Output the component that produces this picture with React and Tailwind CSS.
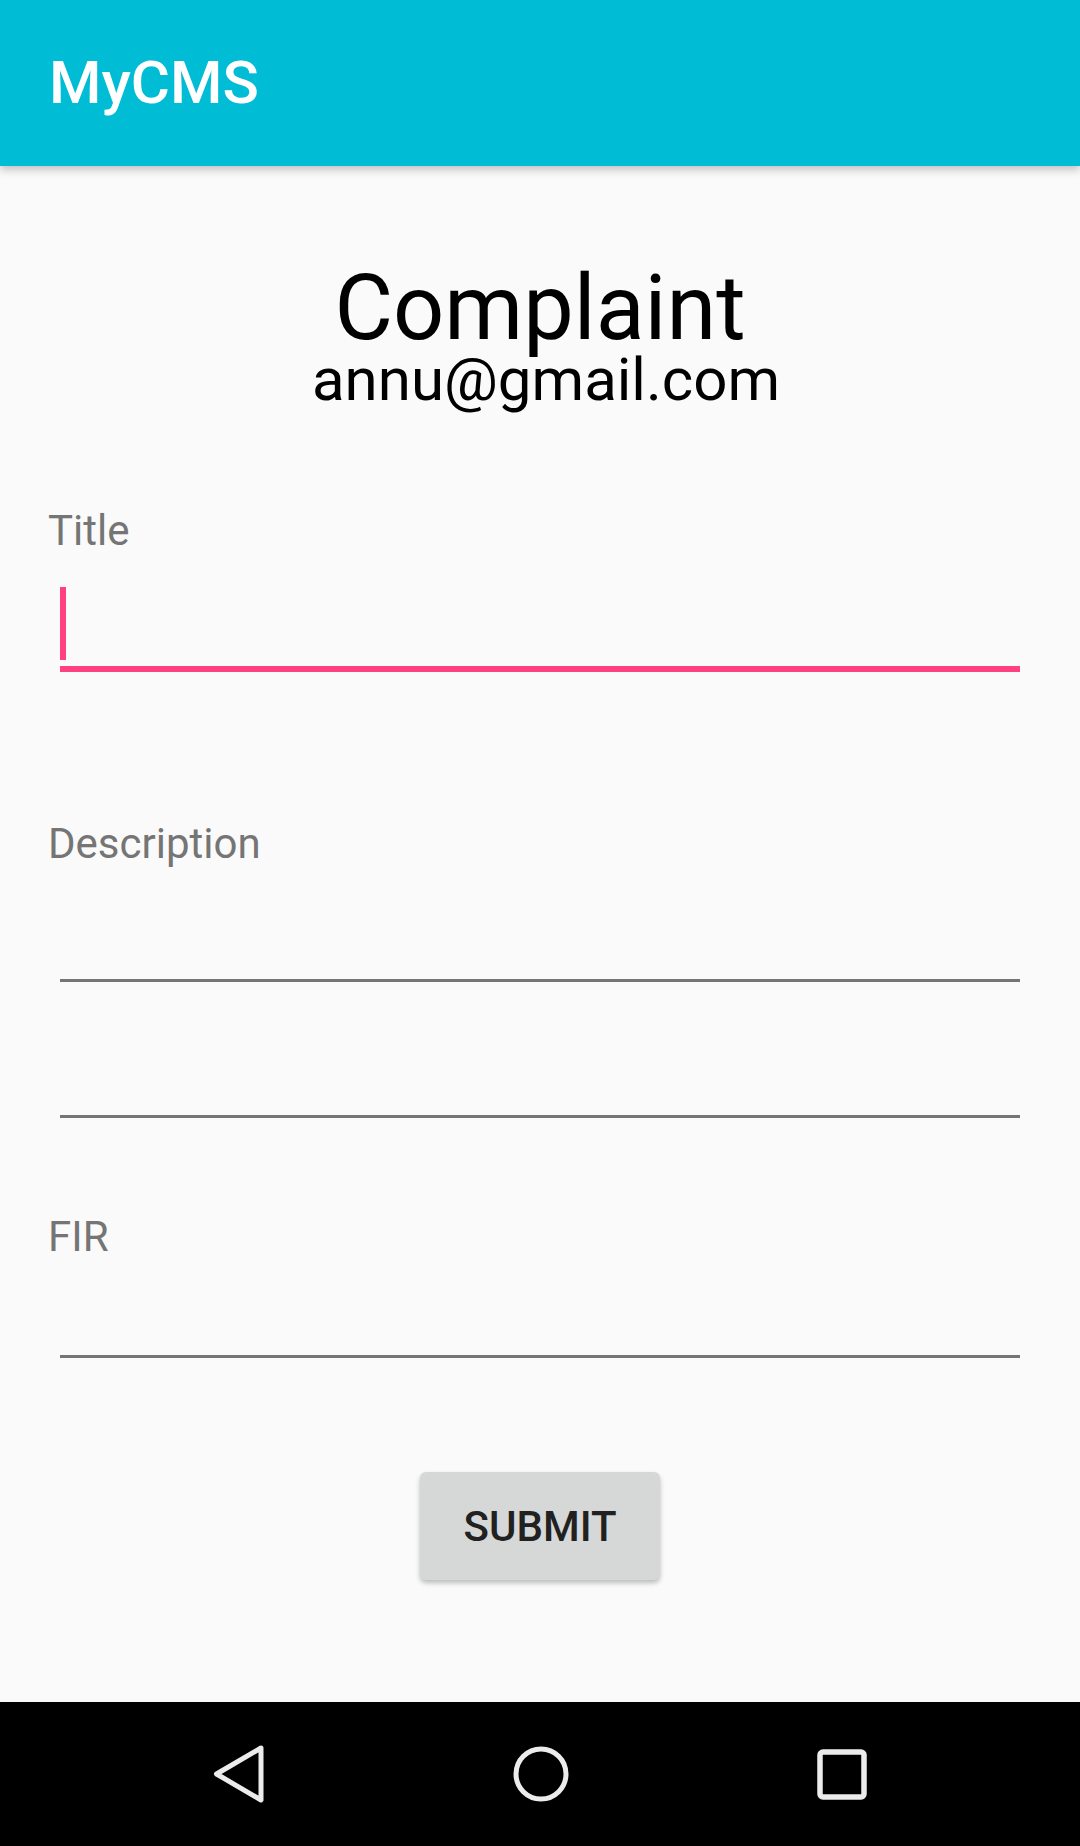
import React from 'react';

const Label = ({ children, className = '' }) => (
  <p className={`ml-[48px] text-[42px] leading-[42px] text-[#757575] ${className}`}>{children}</p>
);

const NavBar = () => (
  <nav className="h-[144px] bg-black flex items-center pl-[213px] gap-[248px]">
    {/* back */}
    <svg width="52" height="58" viewBox="0 0 52 58" className="shrink-0">
      <polygon
        points="48,3 3.5,29 48,55"
        fill="none"
        stroke="#ececec"
        strokeWidth="5"
        strokeLinejoin="round"
      />
    </svg>
    {/* home */}
    <svg width="56" height="56" viewBox="0 0 56 56" className="shrink-0">
      <circle cx="28" cy="28" r="25" fill="none" stroke="#ececec" strokeWidth="5" />
    </svg>
    {/* recents */}
    <svg width="50" height="51" viewBox="0 0 50 51" className="shrink-0">
      <rect x="3" y="3" width="44" height="45" rx="3" fill="none" stroke="#ececec" strokeWidth="5.5" />
    </svg>
  </nav>
);

export default function App() {
  return (
    <div className="min-h-screen h-[1846px] flex flex-col bg-[#fafafa] font-['Roboto','Liberation_Sans',sans-serif]">
      <header className="relative z-10 h-[166px] shrink-0 bg-[#00bcd4] flex items-center pl-[49px] shadow-[0_4px_8px_rgba(0,0,0,0.22)]">
        <h1 className="text-[60px] leading-none font-medium text-white">MyCMS</h1>
      </header>

      <main className="flex-1 flex flex-col">
        <div className="pt-[102px] text-center text-black">
          <h2 className="text-[90px] leading-[82px]">Complaint</h2>
          <p className="pl-[12px] text-[60px] leading-[60px]">annu@gmail.com</p>
        </div>

        {/* title */}
        <Label className="mt-[100px]">Title</Label>
        <div className="mx-[60px] pt-[35px] pb-[6px] border-b-[6px] border-[#ff4081]">
          <div className="w-[6px] h-[73px] bg-[#ff4081]" />
        </div>

        {/* description */}
        <Label className="mt-[151px]">Description</Label>
        <div className="mx-[60px] h-[117px] border-b-[3px] border-[#757575]" />
        <div className="mx-[60px] h-[136px] border-b-[3px] border-[#757575]" />

        {/* fir */}
        <Label className="mt-[98px]">FIR</Label>
        <div className="mx-[60px] h-[100px] border-b-[3px] border-[#757575]" />

        <div className="mt-[114px] flex justify-center">
          <button className="w-[240px] h-[108px] rounded-[6px] bg-[#d6d7d7] text-[42px] font-medium text-[#212121] shadow-[0_3px_5px_rgba(0,0,0,0.25)]">
            SUBMIT
          </button>
        </div>
      </main>

      <NavBar />
    </div>
  );
}
